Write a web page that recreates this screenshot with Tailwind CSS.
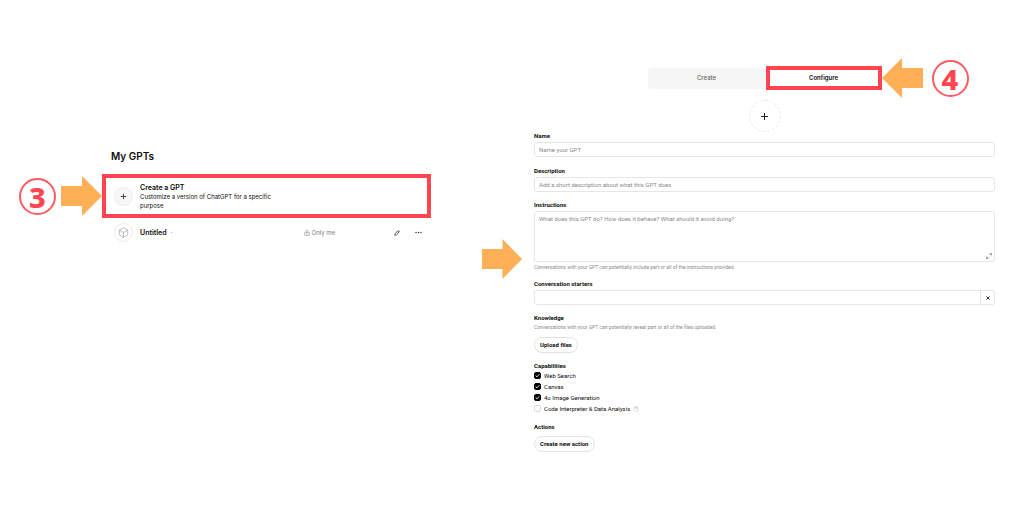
<!DOCTYPE html>
<html lang="en">
<head>
  <meta charset="UTF-8">
  <title>Create a GPT</title>
  <meta name="viewport" content="width=device-width, initial-scale=1.0">
  <script src="https://cdn.jsdelivr.net/npm/@tailwindcss/browser@4"></script>
</head>
<body class="bg-white font-['Inter',sans-serif] text-[#0d0d0d]">

  <main class="grid grid-cols-[431fr_593fr] items-start">

    <!-- My GPTs -->
    <section class="pt-[148px] pl-[19px]">
      <h1 class="pl-[92px] text-[10px] leading-4 font-semibold">My GPTs</h1>

      <!-- Step 3 -->
      <div class="mt-[10px] flex items-center">
        <span class="mr-[5px] flex size-[37px] shrink-0 items-center justify-center rounded-full border-2 border-[#ff5a63] font-['Noto_Sans',sans-serif] text-[29px] leading-none font-extrabold text-[#ff4650]">3</span>
        <svg class="h-10 w-[41px] shrink-0" viewBox="0 0 41 40" fill="#ffb057"><path d="M0 10H21V0L41 20L21 40V30H0Z"/></svg>
        <a href="#create" class="flex h-11 flex-1 items-center gap-[7px] border-4 border-[#ff4650] pl-2">
          <span class="flex size-[19px] shrink-0 items-center justify-center rounded-full border border-[#ececec] bg-[#f7f7f7]">
            <svg class="size-[7px]" viewBox="0 0 7 7" stroke="#222" stroke-width=".8"><path d="M3.5 .8V6.2M.8 3.5H6.2"/></svg>
          </span>
          <span class="w-[136px]">
            <span class="block text-[7px] leading-[9px] font-semibold">Create a GPT</span>
            <span class="block text-[6px] leading-[9px]">Customize a version of ChatGPT for a specific purpose</span>
          </span>
        </a>
      </div>

      <div class="mt-[5px] flex items-center pl-[95px]">
        <span class="flex size-[19px] items-center justify-center rounded-full border border-[#ececec]">
          <svg class="size-[11px]" viewBox="0 0 12 12" fill="none" stroke="#a3a3a3" stroke-width=".8" stroke-linejoin="round"><path d="M6 .8L10.6 3.4V8.6L6 11.2L1.4 8.6V3.4ZM1.4 3.4L6 6L10.6 3.4M6 6V11.2"/></svg>
        </span>
        <a href="#untitled" class="ml-[7px] text-[7px] leading-[9px] font-semibold">Untitled</a>
        <span class="ml-1 text-[7px] leading-[9px] text-[#8f8f8f]">·</span>
        <span class="mr-[59px] ml-auto flex items-center gap-[2px] text-[6px] leading-[9px] text-[#7d7d7d]">
          <svg class="size-[6px]" viewBox="0 0 6 6" fill="none" stroke="#8f8f8f" stroke-width=".6"><rect x=".6" y="2.4" width="4.8" height="3.2" rx=".6"/><path d="M1.7 2.4V1.6A1.3 1.3 0 0 1 4.3 1.6V2.4M2 4H4"/></svg>
          Only me
        </span>
        <button type="button" aria-label="Edit">
          <svg class="size-[6px]" viewBox="0 0 7 7" fill="none" stroke="#333" stroke-width=".9" stroke-linejoin="round"><path d="M.9 6.1L1.3 4.2L4.5 1Q5.2 .5 5.9 1.1Q6.5 1.8 6 2.5L2.8 5.7ZM3.8 1.7L5.3 3.2"/></svg>
        </button>
        <button type="button" aria-label="More" class="mr-[9px] ml-[15px]">
          <svg class="h-[7px] w-[7px]" viewBox="0 0 7 7" fill="#444"><circle cx="1" cy="3.5" r=".8"/><circle cx="3.5" cy="3.5" r=".8"/><circle cx="6" cy="3.5" r=".8"/></svg>
        </button>
      </div>
    </section>

    <!-- GPT editor -->
    <section class="flex items-start gap-3 pt-[66px] pr-[29px] pl-[51px]">
      <svg class="mt-[173px] h-10 w-10 shrink-0" viewBox="0 0 41 40" preserveAspectRatio="none" fill="#ffb057"><path d="M0 10H21V0L41 20L21 40V30H0Z"/></svg>

      <form class="flex-1 font-['Roboto',sans-serif] text-[6px] leading-2">
        <div class="relative mx-auto flex h-6 w-[234px] items-center font-['Inter',sans-serif]">
          <button type="button" class="h-[21px] flex-1 rounded-l-[4px] bg-[#f6f6f6] font-medium text-[#666]">Create</button>
          <button type="button" class="h-6 w-[116px] border-4 border-[#ff4650] bg-white font-semibold">Configure</button>
          <!-- Step 4 -->
          <div class="absolute left-full flex items-center gap-[9px]">
            <svg class="h-10 w-[41px] shrink-0" viewBox="0 0 41 40" fill="#ffb057"><path d="M41 10H20V0L0 20L20 40V30H41Z"/></svg>
            <span class="flex size-[37px] items-center justify-center rounded-full border-2 border-[#ff5a63] font-['Noto_Sans',sans-serif] text-[29px] leading-none font-extrabold text-[#ff4650]">4</span>
          </div>
        </div>

        <button type="button" aria-label="Add image" class="mx-auto mt-[10px] flex size-8 items-center justify-center rounded-full border border-dashed border-[#e9e9e9]">
          <svg class="size-[7px]" viewBox="0 0 7 7" stroke="#222" stroke-width="1"><path d="M3.5 0V7M0 3.5H7"/></svg>
        </button>

        <label for="name" class="block font-bold">Name</label>
        <input id="name" type="text" placeholder="Name your GPT" class="mt-[2px] block h-[15px] w-full rounded-[3px] border border-[#e6e6e6] px-1 placeholder:text-[#8a8a8a]">

        <label for="description" class="mt-[10px] block font-bold">Description</label>
        <input id="description" type="text" placeholder="Add a short description about what this GPT does" class="mt-[2px] block h-[15px] w-full rounded-[3px] border border-[#e6e6e6] px-1 placeholder:text-[#8a8a8a]">

        <label for="instructions" class="mt-[9px] block font-bold">Instructions</label>
        <div class="relative mt-[2px]">
          <textarea id="instructions" placeholder="What does this GPT do? How does it behave? What should it avoid doing?" class="block h-[51px] w-full resize-none rounded-[3px] border border-[#e6e6e6] px-1 py-[3px] placeholder:text-[#8a8a8a]"></textarea>
          <button type="button" aria-label="Expand" class="absolute right-[3px] bottom-[3px]">
            <svg class="size-[6px]" viewBox="0 0 6 6" fill="none" stroke="#777" stroke-width=".7"><path d="M3.5 .6H5.4V2.5M5.4 .6L4.1 1.9M2.5 5.4H.6V3.5M.6 5.4L1.9 4.1"/></svg>
          </button>
        </div>
        <p class="mt-px text-[5px] text-[#8a8a8a]">Conversations with your GPT can potentially include part or all of the instructions provided.</p>

        <label for="starter" class="mt-[9px] block font-bold">Conversation starters</label>
        <div class="mt-[2px] flex h-[15px] rounded-[3px] border border-[#e6e6e6]">
          <input id="starter" type="text" class="min-w-0 flex-1 px-1">
          <button type="button" aria-label="Remove" class="flex w-[14px] items-center justify-center border-l border-[#e6e6e6]">
            <svg class="size-[4px]" viewBox="0 0 4 4" stroke="#222" stroke-width=".9"><path d="M.4 .4L3.6 3.6M3.6 .4L.4 3.6"/></svg>
          </button>
        </div>

        <h2 class="mt-[9px] font-bold">Knowledge</h2>
        <p class="mt-px text-[5px] text-[#8a8a8a]">Conversations with your GPT can potentially reveal part or all of the files uploaded.</p>
        <button type="button" class="mt-[6px] block h-4 rounded-full border border-[#e3e3e3] px-[5px] font-bold">Upload files</button>

        <fieldset class="mt-[9px]">
          <legend class="font-bold">Capabilities</legend>
          <label class="flex h-[11px] items-center gap-[3px]">
            <span class="relative flex size-[7px]">
              <input type="checkbox" checked class="peer size-[7px] appearance-none rounded-[2px] border border-[#dcdcdc] checked:border-black checked:bg-black">
              <svg class="absolute hidden size-[7px] peer-checked:block" viewBox="0 0 7 7" fill="none" stroke="#fff" stroke-width=".9"><path d="M1.7 3.6L3 4.8L5.3 2.3"/></svg>
            </span>
            Web Search
          </label>
          <label class="flex h-[11px] items-center gap-[3px]">
            <span class="relative flex size-[7px]">
              <input type="checkbox" checked class="peer size-[7px] appearance-none rounded-[2px] border border-[#dcdcdc] checked:border-black checked:bg-black">
              <svg class="absolute hidden size-[7px] peer-checked:block" viewBox="0 0 7 7" fill="none" stroke="#fff" stroke-width=".9"><path d="M1.7 3.6L3 4.8L5.3 2.3"/></svg>
            </span>
            Canvas
          </label>
          <label class="flex h-[11px] items-center gap-[3px]">
            <span class="relative flex size-[7px]">
              <input type="checkbox" checked class="peer size-[7px] appearance-none rounded-[2px] border border-[#dcdcdc] checked:border-black checked:bg-black">
              <svg class="absolute hidden size-[7px] peer-checked:block" viewBox="0 0 7 7" fill="none" stroke="#fff" stroke-width=".9"><path d="M1.7 3.6L3 4.8L5.3 2.3"/></svg>
            </span>
            4o Image Generation
          </label>
          <div class="flex h-[11px] items-center gap-[3px]">
            <input id="code" type="checkbox" class="size-[7px] appearance-none rounded-[2px] border border-[#dcdcdc] checked:border-black checked:bg-black">
            <label for="code">Code Interpreter &amp; Data Analysis</label>
            <button type="button" class="flex size-[6px] items-center justify-center rounded-full border border-[#e3e3e3] text-[4px] leading-none text-[#777]">?</button>
          </div>
        </fieldset>

        <h2 class="mt-[9px] font-bold">Actions</h2>
        <button type="button" class="mt-[5px] block h-4 rounded-full border border-[#e3e3e3] px-[5px] font-bold">Create new action</button>
      </form>
    </section>

  </main>

</body>
</html>
